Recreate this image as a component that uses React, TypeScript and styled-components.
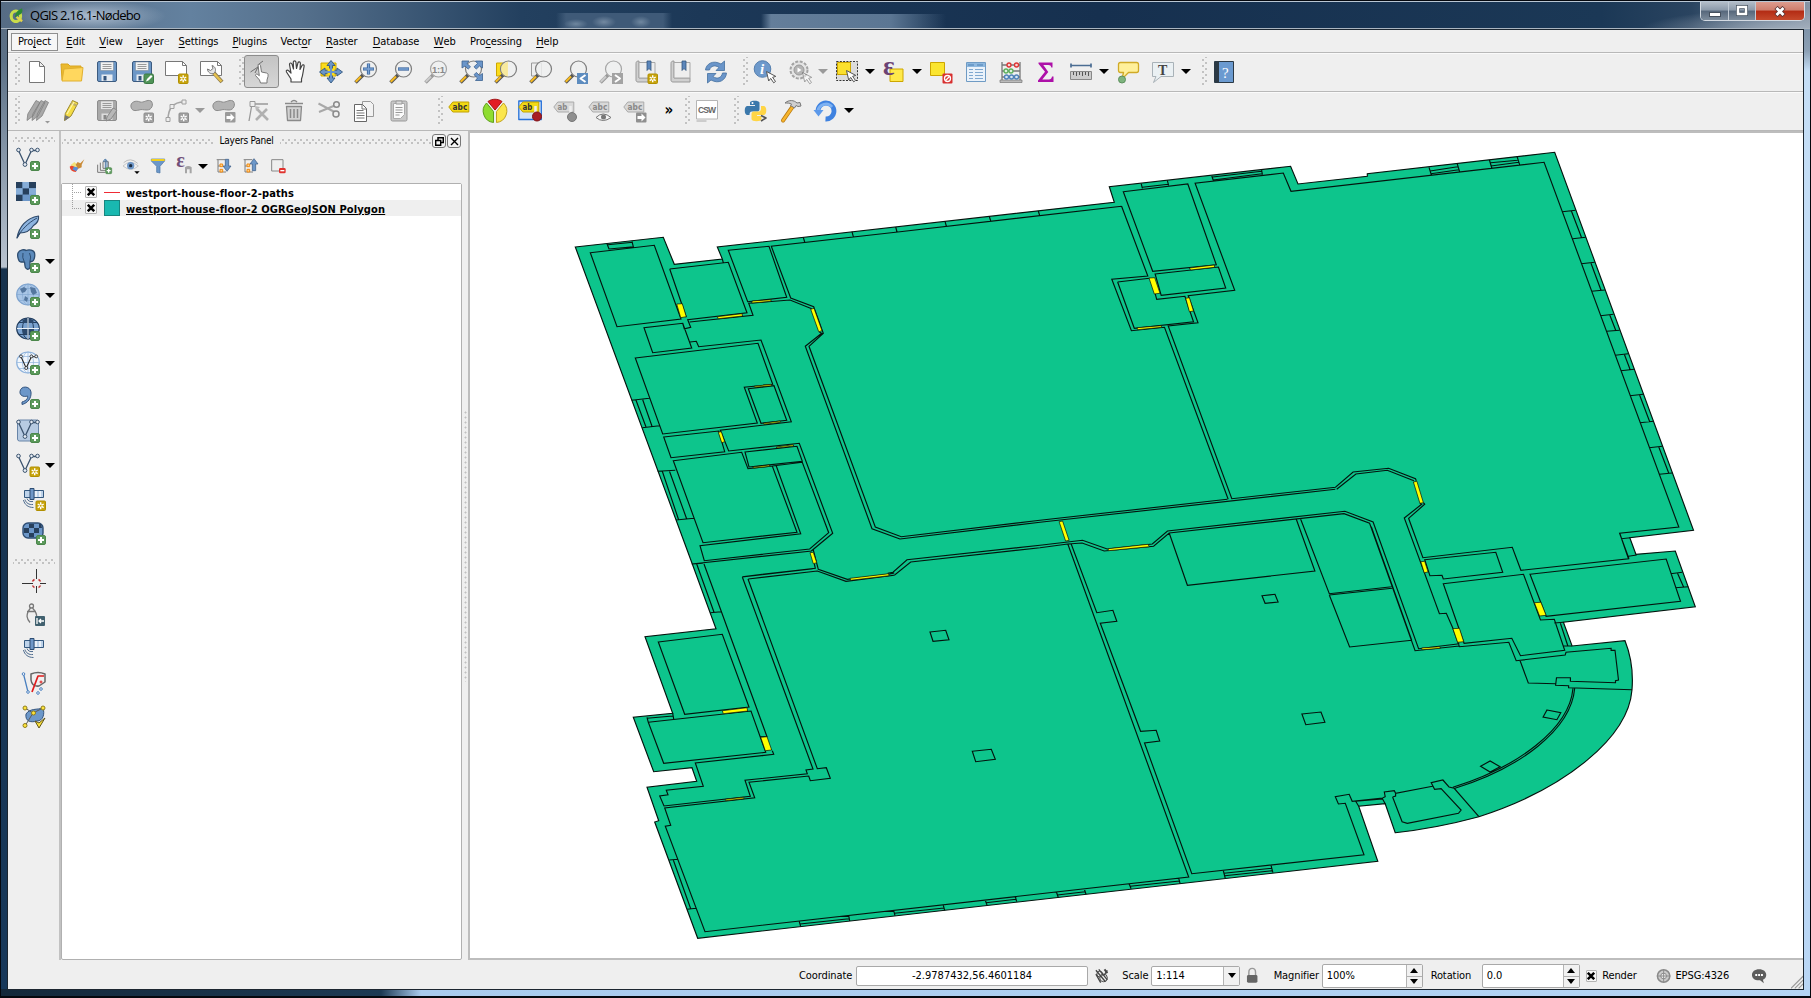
import React from "react";
import styled, { createGlobalStyle } from "styled-components";

const GlobalStyle = createGlobalStyle`
  * { box-sizing: border-box; }
  body {
    margin: 0;
    overflow: hidden;
    font-family: "DejaVu Sans Condensed", "DejaVu Sans", sans-serif;
    font-stretch: condensed;
    font-size: 11px;
    line-height: 14px;
    color: #000;
  }
`;

/* ---------- window chrome ---------- */

const Frame = styled.div`
  width: 1811px;
  height: 998px;
  display: flex;
  flex-direction: column;
  border: 1px solid #05080e;
  border-bottom-width: 2px;
  background:
    linear-gradient(90deg, #14283a 0, #1d3a54 380px, #a9cbee 420px, #b4d4f4 100%) bottom / 100% 7px no-repeat,
    linear-gradient(180deg, #70859c 0, #8ca0b5 50px, #c5def6 70px, #b9d6f5 100%) right / 9px 100% no-repeat,
    linear-gradient(180deg, #5a6c80 0, #5c7187 60px, #b9c3cf 266px, #17324d 268px, #17385a 100%);
  overflow: hidden;
`;

const TitleBar = styled.header`
  flex: 0 0 28px;
  display: flex;
  align-items: center;
  padding-left: 8px;
  border-top: 1px solid #b9c6d3;
  border-bottom: 1px solid #aab5c0;
  background:
    radial-gradient(ellipse 75px 16px at 90px 14px, rgba(190, 205, 222, 0.8), transparent),
    radial-gradient(ellipse 12px 5px at 575px 22px, #6f879f, transparent),
    radial-gradient(ellipse 12px 6px at 603px 20px, #7389a1, transparent),
    radial-gradient(ellipse 10px 6px at 640px 20px, #6f879f, transparent),
    linear-gradient(90deg, transparent 555px, #3f5a78 565px, #3f5a78 662px, transparent 671px) 0 11px / 100% 17px no-repeat,
    linear-gradient(90deg, transparent 760px, #647e9a 770px, #5b7693 890px, transparent 945px) 0 12px / 100% 16px no-repeat,
    radial-gradient(ellipse 160px 22px at 1800px 28px, #a3afbd, transparent),
    linear-gradient(90deg, #566c84 0, #63819f 190px, #55708c 300px, #23405f 520px, #1c3857 700px, #16304f 1100px, #1b3856 1600px, #2a4460 1690px, #6f8499 1790px, #8996a5 100%);
`;

const TitleText = styled.h1`
  flex: 1;
  margin: 0 0 0 6px;
  font: 13px "Open Sans", "Noto Sans", sans-serif;
  line-height: 24px;
  letter-spacing: -0.72px;
  color: #000;
`;

const WindowButtons = styled.div`
  align-self: flex-start;
  display: flex;
  height: 19px;
  margin-right: 5px;
  border: 1px solid #d3dae2;
  border-top: 0;
  border-radius: 0 0 5px 5px;
  overflow: hidden;
`;

const WindowButton = styled.button<{ $w: number; $close?: boolean }>`
  width: ${(p) => p.$w}px;
  height: 18px;
  padding: 0;
  border: 0;
  border-right: 1px solid #c3ccd6;
  display: flex;
  align-items: center;
  justify-content: center;
  background: ${(p) =>
    p.$close
      ? "linear-gradient(#dd9c8e 0, #cf7e6d 45%, #b32b14 50%, #c64a2c 100%)"
      : "linear-gradient(#b3bdc8 0, #8c9aaa 45%, #56677b 50%, #7d8c9c 100%)"};
  &:last-child { border-right: 0; }
`;

const Client = styled.div`
  flex: 1;
  min-height: 0;
  display: flex;
  flex-direction: column;
  margin: 0 6px 6px 6px;
  border: 1px solid #1c2630;
  background: #efefef;
`;

/* ---------- menu and toolbars ---------- */

const MenuBar = styled.nav`
  flex: 0 0 23px;
  display: flex;
  align-items: center;
  padding: 2px 0 0 4px;
  gap: 15.25px;
  border-bottom: 1px solid #b8b8b8;
`;

const MenuItem = styled.span<{ $w: number; $open?: boolean }>`
  width: ${(p) => p.$w}px;
  display: flex;
  justify-content: center;
  white-space: nowrap;
  letter-spacing: -0.1px;
  text-decoration-thickness: 1px;
  outline: ${(p) => (p.$open ? "1px solid #8f8f8f" : "0")};
  padding: ${(p) => (p.$open ? "1px 0" : "0")};
  margin-right: ${(p) => (p.$open ? "-6px" : "0")};
  background: ${(p) => (p.$open ? "#f6f6f6" : "transparent")};
  u { text-underline-offset: 2px; }
`;

const ToolBar = styled.div`
  flex: 0 0 39px;
  display: flex;
  align-items: center;
  padding: 0 0 2px 0.5px;
  border-top: 1px solid #fafafa;
  border-bottom: 1px solid #b8b8b8;
`;

const Grip = styled.span<{ $before?: number }>`
  flex: none;
  width: 6px;
  height: 29px;
  margin-left: ${(p) => p.$before ?? 8}px;
  background:
    radial-gradient(circle, #c2c2c2 0.9px, #fff 1.2px, transparent 1.6px) 0 0 / 4px 6px repeat-y,
    radial-gradient(circle, #c2c2c2 0.9px, #fff 1.2px, transparent 1.6px) 3px 3px / 4px 6px repeat-y;
`;

const DotRow = styled.span<{ $w?: number }>`
  flex: ${(p) => (p.$w ? "none" : "1")};
  width: ${(p) => (p.$w ? `${p.$w}px` : "auto")};
  height: 6px;
  background:
    radial-gradient(circle, #c2c2c2 0.9px, #fff 1.2px, transparent 1.6px) 0 0 / 6px 4px repeat-x,
    radial-gradient(circle, #c2c2c2 0.9px, #fff 1.2px, transparent 1.6px) 3px 3px / 6px 4px repeat-x;
`;

const Tool = styled.button<{ $on?: boolean; $w?: number }>`
  flex: none;
  width: ${(p) => p.$w ?? 35}px;
  height: 33px;
  padding: 0;
  display: flex;
  align-items: center;
  justify-content: center;
  border: 1px solid ${(p) => (p.$on ? "#8c8c8c" : "transparent")};
  border-radius: 3px;
  background: ${(p) => (p.$on ? "linear-gradient(#c4c4c4, #d6d6d6)" : "none")};
`;

const Arrow = styled.span<{ $dim?: boolean }>`
  flex: none;
  width: 12px;
  padding-right: 2px;
  display: flex;
  justify-content: center;
  &::after {
    content: "";
    border: 5px solid transparent;
    border-top-color: ${(p) => (p.$dim ? "#9a9a9a" : "#000")};
    border-bottom: 0;
  }
`;

const More = styled.span`
  width: 23px;
  padding-left: 12px;
  font-size: 15px;
  font-weight: bold;
  line-height: 17px;
`;

/* ---------- work area ---------- */

const Work = styled.main`
  flex: 1;
  min-height: 0;
  display: flex;
`;

const SideBar = styled.aside`
  flex: none;
  width: 53px;
  display: flex;
  flex-direction: column;
  padding: 5px 0 0 5px;
  border-right: 2px solid #c2c2c2;
`;

const SideBreak = styled.div`
  flex: none;
  display: flex;
  align-items: flex-end;
  height: 14px;
`;

const SideTool = styled.div<{ $indent?: boolean }>`
  height: 34px;
  flex: none;
  display: flex;
  align-items: center;
  gap: 5px;
  padding-left: ${(p) => (p.$indent ? 9 : 3)}px;
`;

const Dock = styled.section`
  flex: none;
  width: 401px;
  display: flex;
  flex-direction: column;
`;

const DockTitle = styled.div`
  height: 20px;
  display: flex;
  align-items: center;
  gap: 7px;
  padding: 0 1px;
`;

const DockName = styled.span`
  font-size: 10px;
  letter-spacing: -0.25px;
`;

const DockButton = styled.button`
  width: 14px;
  height: 14px;
  padding: 0;
  margin-left: -6px;
  display: flex;
  align-items: center;
  justify-content: center;
  border: 1px solid #777;
  border-radius: 3px;
  background: #f4f4f4;
`;

const DockTools = styled.div`
  height: 32px;
  display: flex;
  align-items: center;
  padding: 0 0 2px 2px;
`;

const Tree = styled.div`
  flex: 1;
  border: 1px solid #b0b0b0;
  border-radius: 2px;
  background: #fff;
`;

const LayerRow = styled.div<{ $alt?: boolean }>`
  height: 16px;
  display: flex;
  align-items: center;
  background: ${(p) => (p.$alt ? "#efefef" : "#fff")};
`;

const LayerName = styled.span<{ $current?: boolean }>`
  padding-top: 3px;
  font-weight: bold;
  letter-spacing: 0.13px;
  text-decoration: ${(p) => (p.$current ? "underline" : "none")};
  white-space: nowrap;
`;

const Branch = styled.span<{ $last?: boolean }>`
  width: 10px;
  height: 16px;
  margin: 0 3px 0 10px;
  background:
    repeating-linear-gradient(90deg, #a0a0a0 0 1px, transparent 1px 2px) 0 8px / 10px 1px no-repeat,
    repeating-linear-gradient(180deg, #a0a0a0 0 1px, transparent 1px 2px) 0 0 / 1px ${(p) => (p.$last ? 8 : 16)}px no-repeat;
`;

const CheckBox = styled.span`
  width: 12px;
  height: 12px;
  display: flex;
  align-items: center;
  justify-content: center;
  border: 1px solid #b4b4b4;
  border-radius: 1px;
  background: #f7f7f7;
`;

const Swatch = styled.span<{ $line?: boolean }>`
  width: 16px;
  height: ${(p) => (p.$line ? 1 : 16)}px;
  margin: 0 6px 0 7px;
  border: ${(p) => (p.$line ? "0" : "1px solid #17857f")};
  background: ${(p) => (p.$line ? "#ef2b35" : "#19b8b0")};
`;

const Splitter = styled.div`
  flex: none;
  width: 6px;
  display: flex;
  align-items: center;
  justify-content: center;
  &::after {
    content: "";
    width: 3px;
    height: 272px;
    background: radial-gradient(circle, #c0c0c0 0.8px, transparent 1.2px) 0 0 / 3px 5px;
  }
`;

const Canvas = styled.div`
  flex: 1;
  min-width: 0;
  border: 2px solid #bdbdbd;
  border-right: 0;
  background: #fff;
  svg { display: block; }
`;

/* ---------- status bar ---------- */

const StatusBar = styled.footer`
  flex: 0 0 29px;
  display: flex;
  align-items: center;
  padding-top: 2px;
  white-space: nowrap;
`;

const Label = styled.span<{ $w: number; $ml?: number }>`
  flex: none;
  width: ${(p) => p.$w}px;
  margin-left: ${(p) => p.$ml ?? 0}px;
  letter-spacing: -0.1px;
`;

const Field = styled.div<{ $w: number; $center?: boolean; $h?: number }>`
  flex: none;
  width: ${(p) => p.$w}px;
  height: ${(p) => p.$h ?? 20}px;
  display: flex;
  align-items: center;
  justify-content: ${(p) => (p.$center ? "center" : "space-between")};
  padding-left: ${(p) => (p.$center ? 0 : 4)}px;
  border: 1px solid #a9a9a9;
  border-radius: 2px;
  background: #fff;
`;

const Drop = styled.span`
  width: 16px;
  height: 100%;
  display: flex;
  align-items: center;
  justify-content: center;
  border-left: 1px solid #b4b4b4;
  background: #f1f1f1;
`;

const Spin = styled.span`
  width: 16px;
  height: 100%;
  display: grid;
  grid-template-rows: 1fr 1fr;
  place-items: center;
  border-left: 1px solid #b4b4b4;
  background: linear-gradient(#f1f1f1 49%, #b0b0b0 49% 54%, #f1f1f1 54%);
`;

const Spacer = styled.span<{ $w: number }>`
  flex: none;
  width: ${(p) => p.$w}px;
`;

/* ---------- icons ---------- */

const Glyph = styled.svg`
  flex: none;
  overflow: visible;
`;

type Draw = React.ReactNode;
const Svg = ({ s = 24, children }: { s?: number; children: Draw }) => (
  <Glyph width={s} height={s} viewBox="0 0 24 24" fill="none" strokeLinejoin="round">
    {children}
  </Glyph>
);

const Plus = ({ x = 14, y = 14 }) => (
  <g transform={`translate(${x} ${y})`}>
    <rect x=".5" y=".5" width="9" height="9" rx="1.5" fill="#5c9a5c" stroke="#4b874b" />
    <path d="M5 2v6M2 5h6" stroke="#fff" strokeWidth="2" />
  </g>
);
const Star = ({ x = 13.5, y = 13.5, gray = false }) => (
  <g transform={`translate(${x} ${y})`}>
    <rect x=".5" y=".5" width="9.5" height="9.5" rx="1" fill={gray ? "#a0a0a0" : "#c8a40c"} stroke={gray ? "#8d8d8d" : "#b08f00"} />
    <path d="M5.2 1.8v7M2.2 3.5l6 3.6M8.2 3.5l-6 3.6" stroke="#fff" strokeWidth="1.4" />
    <circle cx="5.2" cy="5.3" r="1" fill={gray ? "#a0a0a0" : "#c8a40c"} />
  </g>
);
const Cursor = ({ x = 12, y = 11 }) => (
  <path transform={`translate(${x} ${y})`} d="M.5.5l2.2 9.5 2-2.6 3 4.4 1.8-1.3-2.9-4.2 3.2-.9z" fill="#fff" stroke="#555" />
);
const Lens = ({ gray = false, children }: { gray?: boolean; children?: Draw }) => (
  <>
    <path d="M9 15l-7.500 7.500" stroke={gray ? "#999" : "#555"} strokeWidth="3.600" />
    <path d="M7 16.500l-5.300 5.300" stroke={gray ? "#ccc" : "#f5b921"} strokeWidth="2.200" />
    <circle cx="14.500" cy="9" r="8" fill="#eef0f0" fillOpacity=".85" stroke={gray ? "#a5a5a5" : "#7d7d7d"} strokeWidth="1.200" />
    {children}
  </>
);
const Floppy = ({ gray = false }) => (
  <>
    <rect x="2.500" y="1.500" width="19" height="20" rx="1.500" fill={gray ? "#a9a9a9" : "#6d97c6"} stroke={gray ? "#8d8d8d" : "#3c5b80"} />
    <path d="M5.500 2h13v8.500h-13z" fill={gray ? "#e4e4e4" : "#f2f2f2"} stroke={gray ? "#999" : "#7c8b9b"} strokeWidth=".6" />
    <path d="M7.500 4.500h9M7.500 6.500h9M7.500 8.500h9" stroke="#9a9a9a" />
    <path d="M6.500 14.500h11v6.500h-11z" fill={gray ? "#ddd" : "#e6ebf1"} />
    <path d="M8.500 16h3v4.500h-3z" fill={gray ? "#888" : "#35557c"} />
  </>
);
const Page = ({ children }: { children?: Draw }) => (
  <>
    <path d="M.5 1.500h17l4 4v10h-21z" fill="#fff" stroke="#777" />
    <path d="M17.500 1.500v4h4" stroke="#777" />
    {children}
  </>
);
const Book = () => (
  <>
    <path d="M2 3.500c0-2 1-2.500 3-2.500v17H21v4H4c-1.500 0-2-1-2-2z" fill="#d0d0d0" stroke="#999" />
    <path d="M5 2.500h16v15.500H5z" fill="#eee" stroke="#a8a8a8" />
    <path d="M13 1h4v9.500l-2-2-2 2z" fill="#5b86bb" stroke="#34557f" strokeWidth=".8" />
  </>
);
const Blob = () => (
  <path d="M1 8c-1-5 5-7 9-5 4 1 7-3 11-1 3 3 1 9-4 9-4 0-5-1-8 0-4 1-7 1-8-3z" fill="#b3b3b3" stroke="#8b8b8b" />
);
const Tag = ({ t, gray = false, w = 20 }: { t: string; gray?: boolean; w?: number }) => (
  <>
    <path d={`M.8 8l4-5h${w - 4}v10h-${w - 4}z`} fill={gray ? "#d9d9d9" : "#f3d914"} stroke={gray ? "#aaa" : "#c2a200"} />
    <text x="4.600" y="11" fontSize="8.500" fontWeight="bold" fontFamily="DejaVu Sans Condensed, sans-serif" fill={gray ? "#888" : "#333"} textLength={t.length * 4.9} lengthAdjust="spacingAndGlyphs">
      {t}
    </text>
  </>
);
const Vee = ({ c = "#3b536e" }) => (
  <>
    <path d="M2.500 3.500l6.500 14 6.500-14h6" stroke={c} strokeWidth="1.300" />
    <g fill="#e8eef5" stroke={c}>
      <circle cx="2.500" cy="3" r="1.800" /><circle cx="9" cy="17.500" r="1.900" />
      <circle cx="15.500" cy="3" r="1.800" /><circle cx="21.500" cy="3" r="1.800" />
    </g>
  </>
);
const Satellite = () => (
  <>
    <rect x="2.500" y="3.500" width="19" height="7" fill="#bed3ea" stroke="#33587f" />
    <path d="M14 4v6M18 4v6" stroke="#eaf1f8" strokeWidth="2" />
    <rect x="8" y="1.500" width="4" height="11" fill="#6e97c8" stroke="#2e4d73" />
    <path d="M11 14.500c-3 .5-5-.5-6-3M11 17.500c-4 .5-7-1.500-8-5M11.500 20.500c-5.500 0-9-3-10-7.500" stroke="#4c6a8d" />
  </>
);
const Ball = ({ fill = "#a8c4e4", line = "#34557f", w = 1 }) => (
  <>
    <ellipse cx="12" cy="11.500" rx="11.300" ry="10.500" fill={fill} stroke={line} strokeWidth="1.200" />
    <path d="M12 1v21M1 11.500h22M3 5.500h18M3 17.500h18" stroke={line} strokeWidth={w} />
    <ellipse cx="12" cy="11.500" rx="5.500" ry="10.500" stroke={line} strokeWidth={w} />
  </>
);

const icons: Record<string, Draw> = {
  new: <path d="M4.500 1.500h10l5 5v16h-15zM14.500 1.500v5h5" fill="#fff" stroke="#777" />,
  open: (
    <>
      <path d="M1 4h7l2 2h11v14H2z" fill="#eab92f" stroke="#d9a51f" />
      <path d="M4 9l19-1.500-1.500 13.500L2 21z" fill="#ffd75e" stroke="#e0b030" />
    </>
  ),
  save: <Floppy />,
  saveas: (
    <>
      <Floppy />
      <rect x="14" y="14" width="9.500" height="9.500" rx="1.500" fill="#4f9357" stroke="#3c7a44" />
      <path d="M16 21.500l1-2.500 4-4 1.500 1.500-4 4z" fill="#fff" />
    </>
  ),
  composer: <Page><Star x={13} /></Page>,
  manager: (
    <Page>
      <path d="M13 12l9 10" stroke="#8a7a50" strokeWidth="4" />
      <path d="M14 13.500l7.500 8" stroke="#e7c24d" strokeWidth="2.400" />
      <path d="M14.500 12.500c2-2 1-6-2.500-7l1 3-2.500 2-3-1.500c0 3 3 5.500 6 4.500z" fill="#e5e5e5" stroke="#777" />
    </Page>
  ),
  touch: (
    <>
      <path d="M1.500 12l9-6M6 13l4-8M10 4l4-3" stroke="#6d6d6d" />
      <path d="M9 4.500c1.500-.6 2.200 0 2.500 1L12.500 12l5 1c2 .6 1.500 1.600 1.500 3.500L18 20v3h-6.500l-1-3-4-4.500c0-1.700 1.500-1.800 2.500-.8l1.300 1z" fill="#fff" stroke="#777" />
    </>
  ),
  pan: (
    <path d="M7 22v-3L2.500 12c-.8-1.600.8-2.600 2.200-1.200L7 13 5.500 4.500c0-1.800 2-2 2.500-.4L9.500 9 9.300 2c.2-1.600 2.300-1.600 2.600 0l.6 6.500L14 2.700c.5-1.500 2.400-1 2.400.6L16 9.500l2-4c.8-1.400 2.500-.6 2.100.9-.9 4-1.100 9-2.600 12.600v3z" fill="#fff" stroke="#444" strokeWidth="1.200" />
  ),
  panto: (
    <>
      <rect x="2" y="3" width="15" height="13" fill="#fbdc1c" stroke="#cda600" />
      <path d="M12 .5l4 5h-2.500v4.700H18V8l5.500 4-5.500 4v-2.300h-4.500V18H16l-4 5-4-5h2.500v-4.300H6V16L.5 12 6 8v2.200h4.500V5.500H8z" fill="#6a95c9" stroke="#33577f" strokeWidth=".9" />
      <path d="M8.500 8.500h2.500v2.500H8.500zM13 8.500h2.500v2.500H13zM8.500 13h2.500v2.500H8.500zM13 13h2.500v2.500H13z" fill="#fbdc1c" />
    </>
  ),
  zin: <Lens><path d="M14.500 3.500v11M9 9h11" stroke="#34609a" strokeWidth="3.200" /><path d="M14.500 4v10M9.500 9h10" stroke="#7aa3d4" strokeWidth="1.600" /></Lens>,
  zout: <Lens><path d="M9 9h11" stroke="#34609a" strokeWidth="3.200" /><path d="M9.500 9h10" stroke="#7aa3d4" strokeWidth="1.600" /></Lens>,
  z11: (
    <Lens gray>
      <text x="8" y="12.500" fontSize="9.500" fontWeight="bold" fill="#888" textLength="13" fontFamily="Liberation Sans">1:1</text>
    </Lens>
  ),
  zfull: (
    <>
      <Lens />
      <path d="M3 1h7L8 3.500l3.500 3.300-2.300 2.300L6 6 3 8zM23.500 1h-7l2 2.500L15 6.800l2.300 2.300L20.500 6l3 2zM23.500 20.500h-7l2-2.500-3.500-3.300 2.300-2.300 3.200 3.100 3-2z" fill="#6a95c9" stroke="#3c6290" strokeWidth=".8" />
    </>
  ),
  zsel: <><path d="M2.500 3h10v13h-10z" fill="#fbdc1c" stroke="#cda600" /><Lens><path d="M14 1.500v15A8 8 0 0 1 8 5z" fill="#fae98f" opacity=".8" /></Lens></>,
  zlay: <><path d="M2.500 3h10v13h-10z" fill="#eee" stroke="#999" /><Lens /></>,
  zlast: <><Lens /><rect x="13" y="13" width="11" height="11" fill="#5d8cbf" /><path d="M21.500 15l-5 3.500 5 3.500" stroke="#fff" strokeWidth="2" /></>,
  znext: <><Lens gray /><rect x="13" y="13" width="11" height="11" fill="#a3a3a3" /><path d="M16 15l5 3.500-5 3.500" stroke="#fff" strokeWidth="2" /></>,
  bmnew: <><Book /><Star /></>,
  bm: <Book />,
  refresh: (
    <>
      <path d="M1.500 10C2 4 9-.5 17 4l3.500-3v9.500H12l3-3C11 4.500 6.500 6 5.500 10z" fill="#6a95c9" stroke="#44709f" strokeWidth=".8" />
      <path d="M22.500 13C22 20 15 24.500 7 20l-3.500 3v-9.500H12l-3 3c4 3 8.500 1.500 9.500-3.500z" fill="#6a95c9" stroke="#44709f" strokeWidth=".8" />
    </>
  ),
  identify: (
    <>
      <circle cx="9.500" cy="9" r="8.300" fill="#6d99cb" stroke="#557fae" />
      <text x="7" y="14" fontSize="15" fontStyle="italic" fontWeight="bold" fontFamily="Liberation Serif" fill="#fff">i</text>
      <Cursor x={13} />
    </>
  ),
  action: (
    <>
      <circle cx="11" cy="10" r="8.500" fill="#e5e5e5" stroke="#a3a3a3" strokeWidth="2" strokeDasharray="3 1.500" />
      <circle cx="11" cy="10" r="5" fill="#b5b5b5" stroke="#999" /><path d="M9.500 7.500l4 2.500-4 2.500z" fill="#fff" />
      <g opacity=".5"><Cursor x={14} y={12} /></g>
    </>
  ),
  select: <><rect x="1.500" y="1.500" width="21" height="19" stroke="#333" strokeDasharray="2 1.300" fill="#dcdcdc" /><rect x="2.500" y="2.500" width="13" height="12" fill="#fbe02e" stroke="#cda600" /><Cursor x={11} y={10} /></>,
  expr: (
    <>
      <rect x="8" y="9" width="13" height="12.500" fill="#ffe94a" stroke="#cda600" />
      <text x="1" y="15" fontSize="27" fontFamily="Liberation Serif" fontWeight="bold" fill="#6b4374">ε</text>
    </>
  ),
  desel: (
    <>
      <rect x="1.500" y="2.500" width="14" height="13" fill="#fbe52f" stroke="#cda600" />
      <rect x="13.500" y="13.500" width="10" height="10" rx="1" fill="#d83030" /><circle cx="18.500" cy="18.500" r="3" stroke="#fff" strokeWidth="1.300" /><path d="M20.500 16.500l-4 4" stroke="#fff" strokeWidth="1.300" />
    </>
  ),
  table: (
    <>
      <rect x="2.500" y="2.500" width="19" height="19" fill="#eaf2fa" stroke="#6f9bc4" />
      <path d="M3 3h18v4H3z" fill="#8eb8df" /><path d="M4 5h6M13 5h6" stroke="#4b80b4" />
      <path d="M5 9.500h4M11 9.500h8M5 12.500h4M11 12.500h8M5 15.500h4M11 15.500h8M5 18.500h4M11 18.500h8" stroke="#7fa8d0" strokeWidth="1.200" />
    </>
  ),
  abacus: (
    <>
      <path d="M3 2v19M21 2v19M3 5h18M3 11h18M3 17h18" stroke="#777" strokeWidth="1.300" /><rect x="1" y="20" width="22" height="2.500" fill="#bbb" stroke="#777" strokeWidth=".7" />
      <g fill="#f9d5d5" stroke="#d33" strokeWidth="1.300"><circle cx="10" cy="5" r="2" /><circle cx="17.500" cy="5" r="2" /></g>
      <g fill="#dff0df" stroke="#5db05d" strokeWidth="1.300"><circle cx="7" cy="11" r="2" /><circle cx="12" cy="11" r="2" /></g>
      <g fill="#dbe8f5" stroke="#4d80b8" strokeWidth="1.300"><circle cx="7.500" cy="17" r="2" /><circle cx="12.500" cy="17" r="2" /><circle cx="17.500" cy="17" r="2" /></g>
    </>
  ),
  sigma: <path d="M4.500 2.500h14v5h-1.200c-.5-2-1-2.600-3-2.600h-5l5 7-6 7.600h6.500c2 0 2.600-.8 3.200-3h1.500v5.500h-15.500v-1.500l7-8.800-6.500-8z" fill="#ad10a8" />,
  measure: (
    <>
      <path d="M2 5.500h20M2 3.500v4M22 3.500v4" stroke="#4a6c92" strokeWidth="1.700" />
      <rect x="1.500" y="11.500" width="21" height="8" fill="#ccc" stroke="#888" /><path d="M4.500 12v3M7.500 12v4M10.500 12v3M13.500 12v4M16.500 12v3M19.500 12v4" stroke="#555" />
    </>
  ),
  tip: (
    <>
      <path d="M4.500 2.500h16q2 0 2 2v6q0 2-2 2h-8L6 19l1.500-6.500h-3q-2 0-2-2v-6q0-2 2-2z" fill="#fff09a" stroke="#d0aa27" strokeWidth="1.300" />
      <circle cx="6" cy="19.500" r="3.500" fill="#7eb47e" stroke="#5d905d" />
    </>
  ),
  text: (
    <>
      <path d="M1.500 2.500h21v14H10l-7.500 6 2.500-6H1.500z" fill="#eaf0f3" stroke="#a9b2b8" />
      <text x="7" y="14.500" fontSize="14" fontWeight="bold" fontFamily="Liberation Serif" fill="#444">T</text>
    </>
  ),
  help: (
    <>
      <rect x="2.500" y="1.500" width="19" height="21" fill="#6b9ad0" stroke="#2b3945" /><path d="M3 2h4v20H3z" fill="#2b3945" />
      <text x="10" y="17.500" fontSize="15" fontFamily="Liberation Serif" fill="#fff">?</text>
    </>
  ),
  pencils: (
    <>
      <path d="M2 21.500l.8-6.500L11 1.500l4 2-7 13.500zM7 21.500l.8-6.500L16 1.500l4 2-7 13.500zM11.500 21.500l.8-6.500L20 1.500l3.500 2-6.500 13.500z" fill="#a9a9a9" stroke="#808080" strokeWidth=".8" />
      <path d="M20 22h5l-2.500 2.500z" fill="#999" />
    </>
  ),
  pencil: <><path d="M4.500 21.500l.8-7L12.500 1.500l5.500 2.500-7 13z" fill="#f4dc45" stroke="#9a8830" /><path d="M11 4l5.500 2.500" stroke="#bfae6a" strokeWidth="2" /><path d="M4.500 22l.5-6 5 2.300z" fill="#777" /><path d="M7 15l7-12" stroke="#fff6a5" strokeWidth="1.300" /></>,
  gsave: <><Floppy gray /><path d="M11 22l1-4 6-9 4 2-6 9z" fill="#b8b8b8" stroke="#8a8a8a" /></>,
  blobadd: <><Blob /><Star gray /></>,
  curve: (
    <>
      <path d="M3 21C3 10 8 3 19 3" stroke="#a5a5a5" strokeWidth="1.500" /><g fill="#eee" stroke="#a0a0a0"><rect x="1" y="18.500" width="4" height="4" /><rect x="5" y="5.500" width="4" height="4" /><rect x="17" y="1" width="4" height="4" /></g>
      <Star gray />
    </>
  ),
  blobmove: <><Blob /><rect x="13" y="13" width="10.500" height="10.500" rx="1" fill="#9a9a9a" /><path d="M14.500 17h4v-2.500l4 4-4 4V20h-4z" fill="#fff" /></>,
  node: (
    <>
      <path d="M2 22L5 5h16" stroke="#999" strokeWidth="1.300" /><rect x="3" y="2.500" width="5" height="5" fill="#eee" stroke="#999" />
      <path d="M10 10l11 11M20 10L9 21" stroke="#b0b0b0" strokeWidth="2.600" /><path d="M8 7l5 1-4 4z" fill="#bbb" />
    </>
  ),
  trash: <><path d="M4.500 7.500h15l-1 14h-13z" fill="#d2d2d2" stroke="#8a8a8a" strokeWidth="1.300" /><path d="M3 4.500h18M9 3q3-3 6 0M8.500 10v9M12 10v9M15.500 10v9" stroke="#8a8a8a" strokeWidth="1.500" /></>,
  cut: <><path d="M1.500 4.500l17 9M2 13l17-7" stroke="#a8a8a8" strokeWidth="2" /><circle cx="19.500" cy="5.500" r="2.800" fill="#eee" stroke="#8a8a8a" strokeWidth="1.500" /><circle cx="19" cy="15" r="3" fill="#eee" stroke="#8a8a8a" strokeWidth="1.500" /></>,
  copy: (
    <>
      <path d="M10.500 2.500h8l3 3v12h-11z" fill="#f2f2f2" stroke="#999" /><path d="M2.500 5.500h8l4 4v13h-12z" fill="#fff" stroke="#666" />
      <path d="M10 6v4h4M4.500 11.500h7M4.500 14h8M4.500 16.500h8M4.500 19h8" stroke="#777" />
    </>
  ),
  paste: <><rect x="4" y="2" width="16" height="20" rx="1.500" fill="#c8c8c8" stroke="#999" /><path d="M6.500 4.500h11v11l-4 4h-7z" fill="#fafafa" stroke="#aaa" /><path d="M9 2h6v3H9zM8.500 8.500h7M8.500 11h7M8.500 13.500h7M8.500 16h4" stroke="#999" fill="#ddd" /></>,
  abc: <Tag t="abc" />,
  pie: (
    <>
      <path d="M12 11L5 2.500C9-.5 15-.5 19 2.500z" fill="#e21e25" stroke="#a31418" />
      <path d="M10.500 12.500V23.500A11.500 11.500 0 0 1 3.500 4z" fill="#8fdd30" stroke="#5e9e1c" />
      <path d="M13.500 12.500V23.500A11.500 11.500 0 0 0 20.500 4z" fill="#fbe64c" stroke="#c2a41f" />
    </>
  ),
  abpin: <><rect x=".8" y="2" width="22.500" height="18.500" fill="#d5e3f5" stroke="#2671d9" strokeWidth="1.300" /><Tag t="ab" /><path d="M17.500 7v9" stroke="#eee" strokeWidth="2.500" /><circle cx="19" cy="17.500" r="4.500" fill="#a81e24" stroke="#821217" /></>,
  abgray: <><Tag t="ab" gray /><path d="M17.500 7v9" stroke="#eee" strokeWidth="2.500" /><circle cx="19" cy="18" r="4.500" fill="#8f8f8f" stroke="#777" /></>,
  abeye: <><Tag t="abc" gray /><path d="M8 18.500q7-7 15 0-8 6-15 0z" fill="#f4f4f4" stroke="#777" /><circle cx="15.500" cy="18" r="2.500" fill="#777" /></>,
  abmove: <><Tag t="abc" gray /><rect x="13" y="13.500" width="10.500" height="10" rx="1" fill="#8f8f8f" /><path d="M14.500 17h4v-2.500l4 4-4 4V20h-4z" fill="#fff" /></>,
  csw: (
    <>
      <path d="M1.500 1.500h21v18.500h-21z" fill="#fff" stroke="#b5b5b5" /><path d="M1.500 22h10" stroke="#aaa" />
      <text x="3" y="13.500" fontSize="8.500" fontWeight="bold" fontFamily="Liberation Sans" fill="#666" textLength="18">CSW</text>
    </>
  ),
  python: (
    <>
      <path d="M6 6V3.500C6 1 15 1 15.500 3.500V10c0 2-1 2.500-3 2.500H8C6 12.500 5.500 14 5.500 16H3C0 16 0 7 3 7h8V6z" fill="#3b78ab" />
      <path d="M17 7h3c3 0 3 9 0 9h-7v1h4.500v3c0 3-10 3-10 0v-5c0-2 1.500-2.500 3-2.500h4c2 0 2.500-1.500 2.500-3z" fill="#ffd545" /><circle cx="8.500" cy="4" r="1" fill="#fff" />
      <path d="M17 16.500l5 2.500-5 3" stroke="#555" strokeWidth="1.600" />
    </>
  ),
  hammer: (
    <>
      <path d="M14 7L4 21.500" stroke="#b87a12" strokeWidth="4" strokeLinecap="round" /><path d="M13.500 8L4 21.500" stroke="#f7b42c" strokeWidth="2.500" strokeLinecap="round" />
      <path d="M6 4c4-3.500 9-3 12 0l3-.5 1 3.500-3 .5-2-1-1.500 2.500-4-2.500 1-1.500C11 4 8.500 4 6 4z" fill="#cfcfcf" stroke="#777" />
    </>
  ),
  reload: <><path d="M4 12.500A8 8 0 1 1 11.500 20" stroke="#3f82e0" strokeWidth="4.800" /><path d="M4 11.500A8 8 0 0 1 18 8" stroke="#7db1f2" strokeWidth="3" /><path d="M-.5 11h10l-5 6.500z" fill="#5c99ea" /></>,
  vector: <><Vee /><Plus /></>,
  raster: (
    <>
      <path d="M0 1h20v19H0z" fill="#6c97c9" /><path d="M0 1h6.500v6.300H0zM13 1h7v6.300h-7zM6.500 7.300H13v6.300H6.500zM0 13.600h6.500V20H0z" fill="#27405d" />
      <path d="M6.500 1H13v6.300H6.500zM13 7.300h7v6.300h-7zM0 7.300h6.500v6.300H0z" fill="#86add8" /><Plus />
    </>
  ),
  feather: <><path d="M1 23C3 12 10 3 22.500 1c.5 4-1 7-5 9.500C14 16 8 18 4 18z" fill="#8db4df" stroke="#2f4a6b" strokeWidth="1.200" /><path d="M1 23C5 15 12 8 21 3" stroke="#2f4a6b" /><Plus /></>,
  elephant: <><path d="M2 4c1.500-4 7-3.500 8-2.500 3-1.500 8-.5 8.500 2.500 1 4-1 8.500-2.500 8.500h-2v5.500c-1 4-5 2-5-1l-.5-4H5C2.500 13 1 7 2 4z" fill="#5c8abb" stroke="#2e4d70" strokeWidth="1.300" /><path d="M7 4q-1 5 1 8M13.500 4q2 4 .5 8" stroke="#2e4d70" /><Plus /></>,
  earth: <><Ball fill="#a9c6e7" line="#7fa4cf" w={0.6} /><path d="M4 6l4-2 3 2-2 3-3 1zM14 4l5 1 2 5-4 2-2-3zM9 13l3 2-1 4-3-2z" fill="#54779f" /><Plus /></>,
  globe: <><Ball fill="#7aa2d0" line="#243f60" /><path d="M6.500 3q5-3 11 0v3h-11zM7 12h10v5H7z" fill="#2b486c" /><path d="M12 1v21M1 11.500h22" stroke="#e8f0f8" /><Plus /></>,
  wfs: <><Ball fill="#f2f7fc" line="#8fb3dc" w={0.7} /><g transform="translate(3 3) scale(.8)"><Vee c="#222" /></g><Plus /></>,
  comma: <><path d="M6 17c5-1.500 6-4 5.500-6C7 12.500 3.500 10 4 6.500c.6-6 10-6 11 .5.600 6-3 11-9 12.500z" fill="#6c97c9" stroke="#34557f" /><Plus /></>,
  virtual: <><rect x="1.500" y="1" width="21" height="21" rx="2" fill="#b7cbe2" stroke="#6885a8" /><Vee /><Plus /></>,
  newvec: <><Vee /><Star /></>,
  satnew: <><Satellite /><Star /></>,
  rastadd: <><rect x="1" y="2" width="20" height="15" rx="5" fill="#6c97c9" stroke="#2e4d73" strokeWidth="1.400" /><path d="M7 3h5v4H7zM2 7h5v5H2zM12 7h5v5h-5zM7 12h5v4H7zM17 3h2l1 4h-3z" fill="#27405d" /><Plus /></>,
  cross: <><path d="M14.500 0v10M14.500 17v7M0 14.500h11M18 14.500h6" stroke="#333" /><path d="M10.500 12.500a4.500 4.500 0 0 1 2-2M16.500 10.500a4.500 4.500 0 0 1 2 2M18.500 16.500a4.500 4.500 0 0 1-2 2M12.500 18.500a4.500 4.500 0 0 1-2-2" stroke="#c03030" strokeWidth="1.500" /></>,
  compass: <><circle cx="9.500" cy="3" r="2" stroke="#777" strokeWidth="1.300" /><path d="M8.500 5C3 12 5 16 8 19.500M10.500 5C15 10 15 12 14.500 14M5 8.500h9" stroke="#777" strokeWidth="1.300" /><rect x="13" y="13" width="10" height="10" rx="1" fill="#41616f" /><path d="M15 15v6M22 18h-5M19 16l-2 2 2 2" stroke="#fff" strokeWidth="1.300" /></>,
  sat: <Satellite />,
  topo: <><path d="M1.500 3L6 21" stroke="#4a80c0" strokeWidth="1.300" /><g stroke="#4a80c0" fill="#fff"><circle cx="1.500" cy="3" r="1.300" /><circle cx="6" cy="21" r="1.300" /><circle cx="16" cy="22" r="1.300" /><circle cx="19" cy="18" r="1.300" /></g><path d="M9 9V3q7-3 14 0v8l-6 4q-7 1-8-6z" stroke="#666" strokeWidth="1.500" /><path d="M10 21L16 5h6" stroke="#e01c1c" strokeWidth="1.700" /><circle cx="19" cy="11" r="1" stroke="#e01c1c" /></>,
  checker: <><path d="M4 9C8 3 15 5 21 3c2 6 0 13-6 13-7 2-12 0-11-7z" fill="#6c97c9" stroke="#34557f" /><path d="M3 3l8 5 10-5M11 8L3 21" stroke="#5c5c5c" /><g fill="#ffe53b" stroke="#8f7d1d"><circle cx="3" cy="3" r="2" /><circle cx="21" cy="3" r="2" /><circle cx="11.500" cy="8" r="2" /><circle cx="3" cy="20.500" r="2" /></g><path d="M13 16l4 2 6-5-6 10z" fill="#ffe53b" stroke="#5f5416" /></>,
};

const panelIcons: Record<string, Draw> = {
  brush: <><path d="M1 13l6-4 7 6-4 6Q2 20 1 13z" fill="#e8452c" /><path d="M5 17l4-6 5 4-3 5z" fill="#5b8fd8" /><path d="M2 11l6-5 6 5-3 3z" fill="#f2e27a" /><path d="M10 10l3-4 4 2 6-6-4 8v4l-5 2z" fill="#c98a35" /></>,
  group: <><path d="M2.500 10v11.500H14M6.500 7v11.500h12M18.500 5.500h-8v10h8z" stroke="#777" strokeWidth="1.500" /><path d="M14 2v14M11.500 6q0-4 2.500-4t2.500 4v8" stroke="#4d7aa8" strokeWidth="1.500" /><Plus x={14} y={14} /></>,
  eye: <><path d="M0 12Q11 1 23 12 12 22 0 12z" fill="#f2f2f2" stroke="#b0b0b0" /><circle cx="11.500" cy="11.500" r="5.500" fill="#6e97c8" /><circle cx="11.500" cy="11.500" r="2.500" fill="#1c2d42" /><path d="M1 7Q11-2 22 8" stroke="#bdbdbd" strokeWidth="1.500" /><path d="M17 20h8l-4 4z" fill="#000" /></>,
  filter: <><path d="M2 1.500h20v3l-7 8v10l-5-1v-9l-8-8z" fill="#6c97c9" stroke="#4572a4" /><path d="M2 1.500h20v3H2z" fill="#f2cf1d" /></>,
  expr: <><text x="-1" y="14" fontSize="30" fontFamily="Liberation Serif" fontWeight="bold" fill="#71507a">ε</text><path d="M12 23v-9q5-4 10 0v9h-3v-6h-4v6z" fill="#a5a5a5" /></>,
  expand: <><path d="M1 2.500h13M3 3v18h12M3 12h5" stroke="#777" strokeWidth="1.400" /><g fill="#ffd28a" stroke="#f08a12" strokeWidth="1.500"><rect x="6" y="9" width="4" height="4" /><rect x="6" y="17" width="4" height="4" /></g><path d="M14 2h5v10h3.500L16.500 20l-6-8H14z" fill="#6c97c9" stroke="#34557f" /></>,
  collapse: <><path d="M1 2.500h13M3 3v18h12M3 12h5" stroke="#777" strokeWidth="1.400" /><g fill="#ffd28a" stroke="#f08a12" strokeWidth="1.500"><rect x="6" y="9" width="4" height="4" /><rect x="6" y="17" width="4" height="4" /></g><path d="M14 19h5V9h3.500L16.500 1l-6 8H14z" fill="#6c97c9" stroke="#34557f" /></>,
  remove: <><path d="M2.500 2.500h17v17h-17z" stroke="#888" strokeWidth="1.500" /><rect x="13.500" y="15" width="10" height="8" rx="2" fill="#e0322e" /><path d="M15.500 19h6" stroke="#fff" strokeWidth="2" /></>,
};

const Icon = ({ n, on }: { n: string; on?: boolean }) => (
  <Tool $on={on}><Svg>{icons[n]}</Svg></Tool>
);

/* ---------- floor plan ---------- */

const grid = (ox: number, oy: number, sx: number, sy: number) => (d: string) =>
  d.replace(/(-?[\d.]+),(-?[\d.]+)/g, (_, x, y) => `${(ox + +x / sx - 470).toFixed(1)},${(oy + +y / sy - 133).toFixed(1)} `);

const nw = grid(560, 220, 3, 3);
const sw = grid(620, 560, 3, 3);
const ne = grid(1080, 140, 2.45, 3);
const se = grid(1040, 460, 2.3059, 3);
const top = grid(850, 160, 3, 3);

const outline =
  nw("M46,81L310,52L343,133L487,117L472,81") +
  top("L793,127L778,80") +
  ne("L516,79L534,132L704,109L704,101L1163,37L1503,1171L1347,1193L1362,1243") +
  se("L1465,273L1511,440L1207,487L1227,558L1349,542C1362,585 1368,640 1365,689C1357,830 1215,985 1012,1070C950,1092 890,1108 819,1118L796,1031L735,1039L779,1204") +
  sw("L233,1135L104,786L116,782L81,682L230,664L216,623L101,635L40,472L158,460L75,230L288,206L217,12") +
  "Z";

const walls =
  nw(
    "M91,98L283,76L363,297L171,320ZM141,71L147,87L220,80L216,64M143,74L218,67M329,147L505,127L561,278L383,299L392,322L373,326L368,310L252,323L278,398L395,384L368,310M329,147L379,292" +
      "M487,117L490,128M389,306L579,286L566,250L690,240L755,266M505,91L627,79L680,232L563,245ZM778,336L785,340L736,379L936,926L1020,957" +
      "M390,366L409,364L416,380L603,360L694,605L481,631L506,693L718,670L818,940L753,994M226,414L594,370L638,493L553,502L592,609L308,642ZM565,506L642,497L680,601L603,610Z" +
      "M215,541L268,535M247,623L298,617M228,541L258,621M248,539L276,619M311,651L476,633L494,695L333,713ZM340,722L545,697L564,746L637,738L711,937L429,968ZM555,696L711,679L727,724L567,741Z" +
      "M649,738L722,941L420,977L433,1022L749,987L806,938L727,727L637,738M395,1032L755,993M763,1031L766,1045L547,1070M760,990L775,1048L862,1078L990,1062L1003,1059M565,1077L772,1053L858,1084L1003,1066" +
      "M293,754L346,751M348,900L401,895M307,754L356,900M328,752L380,897M730,52L734,66"
  ) +
  nw("M1020,35L634,79L692,234L761,260L790,340L747,379L946,921L1024,950") + se("L0,181L432,118") +
  nw("M1020,957") + se("L0,187L681,88") +
  nw("M1020,35") + ne("L102,199") +
  top("M6,215L10,230M137,201L141,216M285,184L289,198M418,169L422,183M565,153L569,167") +
  ne(
    "M102,199L166,408L78,418L126,572L207,562L363,1078M106,155L264,132L334,374L178,394ZM1345,1256L1322,1180L1467,1161L1137,67L517,154L498,99L282,130L379,451L265,467L289,548L216,558L372,1076L626,1042L669,996L756,985L822,1016L824,1022" +
      "M184,402L339,381L357,444L199,466ZM92,426L170,415M184,460L188,478L257,469L278,545L133,565L92,426M629,1048L676,1002L753,991L818,1022" +
      "M150,131L153,145M214,121L217,136M153,142L216,133M323,108L327,123M445,90L447,104M326,120L446,101M325,111L445,94M855,82L861,105M924,70L930,95M858,93L925,80M860,101L928,89M1003,60L1009,84M1071,50L1077,74M1006,68L1072,61M1007,78L1075,67" +
      "M1182,215L1214,211M1207,296L1239,292M1204,213L1229,293M1228,371L1261,367M1253,454L1286,450M1252,370L1277,452M1275,527L1307,523M1290,574L1322,571M1298,525L1313,572M1311,646L1343,641M1325,692L1358,688M1334,644L1348,689M1347,767L1380,763M1372,848L1405,844M1371,765L1396,846M1394,923L1427,919M1419,1003L1451,999M1418,921L1443,1001"
  ) +
  sw("M803,40L819,37L861,-1") + se("L0,256L98,241L155,267L259,252L294,213L703,154L768,186L873,566L967,551") +
  sw("M806,48L824,45L872,6") + se("L0,263L64,252L97,249L148,273L262,259L298,219L701,161L760,190L865,572L967,558") +
  sw(
    "M217,12L250,10M230,12L282,157M271,158L303,155M252,12L441,530L422,530M367,51L580,26M367,51L579,627L558,630L562,641L375,661L391,709L132,738L119,708L144,704L139,691L250,679L226,609L461,583L457,572" +
      "M115,246L307,223L387,441L194,463ZM85,487L393,453L437,577L131,610ZM81,472L85,487M158,460L161,477M81,475L158,468M148,900L174,898M160,900L212,1046M202,1048L228,1045M930,216L977,211L987,239L939,244ZM1057,574L1114,568L1126,598L1067,605Z" +
      "M538,1085L542,1100M686,1067L689,1083M540,1092L687,1076M821,1052L825,1067M970,1036L974,1051M823,1060L972,1044M1096,1021L1101,1035M1186,1010L1190,1025M1098,1028L1188,1018" +
      "M384,57L592,626L619,623L631,655L571,662L566,648L387,667L404,713L134,744L152,796L136,799L255,1115"
  ) +
  se(
    "L343,1251L64,252M72,252L131,458L168,451L177,484L139,490L232,814L268,811L276,843L241,849L350,1241L747,1184L704,1030L688,1032L681,1010L713,1003L720,1024L790,1014L796,1010L794,996L817,992L820,1000L905,979" +
      "M298,219L340,376L634,333L591,178M601,177L667,401L811,380M667,405L714,561L857,541M667,405L812,385M764,200L857,541M512,407L542,403L549,426L519,430ZM604,762L648,756L657,787L613,794ZM1169,750L1201,758L1192,779L1160,771ZM1016,919L1038,903L1061,920L1038,936Z" +
      "M884,128L887,133L850,175L883,293L1089,262L1109,331L1357,296L1341,236M876,130L880,133L840,174L921,461L937,460L952,505L967,560L1081,547L1098,602L1211,585L1213,577L1317,565L1317,571L1326,571L1334,660L1327,662L1327,668L1223,664L1223,653L1191,653L1189,676L1219,677L1219,683L1365,689M1189,671L1126,669L1107,602" +
      "M887,299L1051,277L1067,337L930,357L927,346L899,347ZM930,371L1115,343L1154,480L1186,478L1210,571L1108,587L1088,535L978,550ZM1130,343L1444,297L1477,424L1167,469ZM1454,341L1481,337M1465,383L1495,380M1470,340L1484,381" +
      "M1186,489L1207,487M1207,558L1227,558M1200,490L1217,557M1337,220L1341,236L1361,233M1357,289L1376,285M728,1024L735,1039M728,1024L790,1017L796,1031" +
      "M813,1011L835,1085L847,1090L965,1060L971,1050L925,986L910,988L902,968L929,960L943,981L955,985L1012,1070M820,1000L820,1008L813,1011" +
      "M1233,685C1225,810 1105,925 957,985M1229,685C1221,807 1101,922 952,982" +
      "M38,1297L42,1312M102,1286L106,1303M40,1305L104,1295M206,1273L210,1286M320,1256L323,1271M208,1279L322,1263M423,1233L427,1254M533,1217L537,1238M424,1240L534,1225M426,1247L536,1232"
  );

const doors =
  nw(
    "M577,243L634,239L632,244L575,249ZM472,290L546,281L548,288L475,296ZM752,268L762,265L786,332L776,335ZM350,252L367,251L379,290L362,293ZM582,499L633,493L635,497L584,502ZM610,610L660,603L662,607L612,613ZM475,637L484,635L494,665L485,668ZM649,681L700,674L701,678L651,684ZM578,741L628,735L630,739L581,744ZM750,998L760,997L770,1028L760,1031ZM870,1075L986,1061L987,1067L872,1081Z"
  ) +
  sw("M307,452L381,443L383,453L310,461ZM422,532L441,530L455,570L436,572ZM316,718L371,712L372,716L317,722Z") +
  ne("M268,384L329,375L330,382L271,390ZM169,414L183,413L196,460L182,462ZM259,475L268,473L278,513L268,515ZM140,563L200,557L200,562L141,569Z") +
  se(
    "M44,185L52,183L67,241L59,243ZM157,266L249,253L252,260L158,272ZM861,66L869,64L884,128L876,130ZM878,305L887,304L895,336L886,338ZM880,564L922,560L923,565L881,569ZM952,506L967,505L977,545L963,547ZM1140,428L1155,427L1167,466L1152,468Z"
  );

const FloorPlan = () => (
  <svg width="1333" height="824" viewBox="0 0 1333 824" stroke="#04130d" strokeWidth="1.15" fill="none">
    <path d={outline} fill="#0dc58c" />
    <path d={walls} />
    <path d={doors} fill="#ffff00" strokeWidth=".7" />
  </svg>
);

/* ---------- page ---------- */

const menus: [string, string, string, number][] = [
  ["Pro", "j", "ect", 45], ["", "E", "dit", 19], ["", "V", "iew", 21], ["", "L", "ayer", 27], ["", "S", "ettings", 39], ["", "P", "lugins", 33],
  ["Vect", "o", "r", 29], ["", "R", "aster", 32], ["", "D", "atabase", 46], ["", "W", "eb", 21], ["Pro", "c", "essing", 51], ["", "H", "elp", 21],
];

const Cross = () => (
  <svg width="8" height="8" viewBox="0 0 8 8"><path d="M.8.8l6.400 6.400M7.200.8L.8 7.200" stroke="#000" strokeWidth="2.500" /></svg>
);
const Tri = ({ up }: { up?: boolean }) => (
  <svg width="8" height="5" viewBox="0 0 8 5"><path d={up ? "M0 5l4-5 4 5z" : "M0 0h8l-4 5z"} fill="#000" /></svg>
);

const side: [string, boolean][] = [
  ["vector", false], ["raster", false], ["feather", false], ["elephant", true], ["earth", true], ["globe", false], ["wfs", true], ["comma", false], ["virtual", false], ["newvec", true],
];

const list = (names: string) => names.split(" ").map((n) => <Icon key={n} n={n} on={n === "touch"} />);

export default function App() {
  return (
    <Frame>
      <GlobalStyle />
      <TitleBar>
        <svg width="15" height="16" viewBox="0 0 24 24" fill="none">
          <ellipse cx="11" cy="14" rx="7.500" ry="8.500" stroke="#c9dc4b" strokeWidth="5" />
          <path d="M12 15l9 7" stroke="#e3d34a" strokeWidth="4" /><path d="M9 16Q10 5 21 1q2 8-5 11z" fill="#2c8a35" />
        </svg>
        <TitleText>QGIS 2.16.1-Nødebo</TitleText>
        <WindowButtons>
          <WindowButton $w={28}><svg width="12" height="14" viewBox="0 0 12 14"><rect x=".5" y="8.500" width="11" height="4" fill="#fff" stroke="#45505e" /></svg></WindowButton>
          <WindowButton $w={27}><svg width="12" height="12" viewBox="0 0 12 12"><rect x="2" y="2" width="8" height="7" fill="none" stroke="#45505e" strokeWidth="4" /><rect x="2" y="2" width="8" height="7" fill="none" stroke="#fff" strokeWidth="2.500" /></svg></WindowButton>
          <WindowButton $w={48} $close><svg width="12" height="11" viewBox="0 0 12 11"><path d="M2 1.500l8 8M10 1.500l-8 8" stroke="#5c3434" strokeWidth="4.500" /><path d="M2.500 2l7 7M9.500 2l-7 7" stroke="#fff" strokeWidth="2.800" /></svg></WindowButton>
        </WindowButtons>
      </TitleBar>
      <Client>
        <MenuBar>
          {menus.map(([a, u, b, w], i) => (
            <MenuItem key={i} $w={w} $open={i === 0}>{a}<u>{u}</u>{b}</MenuItem>
          ))}
        </MenuBar>
        <ToolBar>
          <Grip $before={5} />
          {list("new open save saveas composer manager")}
          <Grip />
          {list("touch pan panto zin zout z11 zfull zsel zlay zlast znext bmnew bm refresh")}
          <Grip />
          {list("identify action")}<Arrow $dim />
          {list("select")}<Arrow />
          {list("expr")}<Arrow />
          {list("desel table abacus sigma measure")}<Arrow />
          {list("tip text")}<Arrow />
          <Grip />
          {list("help")}
        </ToolBar>
        <ToolBar>
          <Grip $before={5} />
          {list("pencils pencil gsave blobadd curve")}<Arrow $dim />
          {list("blobmove node trash cut copy paste")}
          <Grip $before={20} />
          {list("abc pie abpin abgray abeye abmove")}
          <More>»</More>
          <Grip />
          {list("csw")}
          <Grip />
          {list("python hammer reload")}<Arrow />
        </ToolBar>
        <Work>
          <SideBar>
            <DotRow $w={42} />
            {side.map(([n, drop]) => (
              <SideTool key={n}><Svg>{icons[n]}</Svg>{drop && <Arrow />}</SideTool>
            ))}
            {["satnew", "rastadd"].map((n) => <SideTool key={n} $indent><Svg>{icons[n]}</Svg></SideTool>)}
            <SideBreak><DotRow $w={42} /></SideBreak>
            {["cross", "compass", "sat", "topo", "checker"].map((n) => <SideTool key={n} $indent><Svg>{icons[n]}</Svg></SideTool>)}
          </SideBar>
          <Dock>
            <DockTitle>
              <DotRow />
              <DockName>Layers Panel</DockName>
              <DotRow />
              <DockButton><svg width="9" height="9" viewBox="0 0 9 9" fill="none" stroke="#000"><path d="M3 3V.8h5.300v4.800H6" strokeWidth="1.500" /><path d="M.7 3.500h5v4.800h-5z" strokeWidth="1.400" /></svg></DockButton>
              <DockButton><svg width="9" height="9" viewBox="0 0 9 9" stroke="#000" strokeWidth="1.400"><path d="M1 1l7 7M8 1L1 8" /></svg></DockButton>
            </DockTitle>
            <DockTools>
              {["brush", "group", "eye", "filter", "expr"].map((n) => <Tool key={n} $w={27}><Svg s={16}>{panelIcons[n]}</Svg></Tool>)}
              <Arrow />
              {["expand", "collapse", "remove"].map((n) => <Tool key={n} $w={27}><Svg s={16}>{panelIcons[n]}</Svg></Tool>)}
            </DockTools>
            <Tree>
              <LayerRow><Branch /><CheckBox><Cross /></CheckBox><Swatch $line /><LayerName>westport-house-floor-2-paths</LayerName></LayerRow>
              <LayerRow $alt><Branch $last /><CheckBox><Cross /></CheckBox><Swatch /><LayerName $current>westport-house-floor-2 OGRGeoJSON Polygon</LayerName></LayerRow>
            </Tree>
          </Dock>
          <Splitter />
          <Canvas><FloorPlan /></Canvas>
        </Work>
        <StatusBar>
          <Label $w={57} $ml={791}>Coordinate</Label>
          <Field $w={232} $center>-2.9787432,56.4601184</Field>
          <Spacer $w={6} />
          <svg width="16" height="16" viewBox="0 0 16 16" fill="none" stroke="#444"><path d="M2 2l10 12M5 1l9 11M2 6l5 9M14 2l-4 6" strokeWidth="1.400" /><circle cx="6" cy="6" r="3" /><circle cx="10" cy="10" r="4" /><path d="M11 1l3 4" strokeWidth="2" /></svg>
          <Label $w={29} $ml={13}>Scale</Label>
          <Field $w={89}>1:114<Drop><Tri /></Drop></Field>
          <Spacer $w={6} />
          <svg width="13" height="17" viewBox="0 0 13 17" fill="none"><path d="M3 9V5q0-4 3.500-4T10 5v4" stroke="#999" strokeWidth="1.500" /><rect x="1" y="8" width="11" height="8" rx="1.500" fill="#666" /></svg>
          <Label $w={48} $ml={15}>Magnifier</Label>
          <Field $w={101} $h={24}>100%<Spin><Tri up /><Tri /></Spin></Field>
          <Label $w={51} $ml={8}>Rotation</Label>
          <Field $w={98} $h={24}>0.0<Spin><Tri up /><Tri /></Spin></Field>
          <Spacer $w={6} />
          <CheckBox><Cross /></CheckBox>
          <Label $w={36} $ml={5}>Render</Label>
          <Spacer $w={18} />
          <svg width="16" height="16" viewBox="0 0 16 16" fill="none" stroke="#8a8a8a"><circle cx="8" cy="8" r="6.500" fill="#ccc" strokeWidth="1.600" /><circle cx="8" cy="8" r="3" fill="#eee" /><path d="M8 1v14M1 8h14" /></svg>
          <Label $w={55} $ml={4}>EPSG:4326</Label>
          <Spacer $w={21} />
          <svg width="17" height="16" viewBox="0 0 17 16"><path d="M8.500 1C13 1 16 3.500 16 7c0 2.500-1.500 4-3.500 5l1 3.500-4-3C4 13 1 10.500 1 7s3-6 7.500-6z" fill="#5d5d5d" /><path d="M4.500 6h2v2h-2zM7.500 6h2v2h-2zM10.500 6h2v2h-2z" fill="#fff" /></svg>
          <Spacer $w={23} />
          <svg width="13" height="27" viewBox="0 0 13 27" stroke="#999"><path d="M0 27L13 14M4 27l9-9M8 27l5-5" strokeWidth="1.200" /></svg>
        </StatusBar>
      </Client>
    </Frame>
  );
}
